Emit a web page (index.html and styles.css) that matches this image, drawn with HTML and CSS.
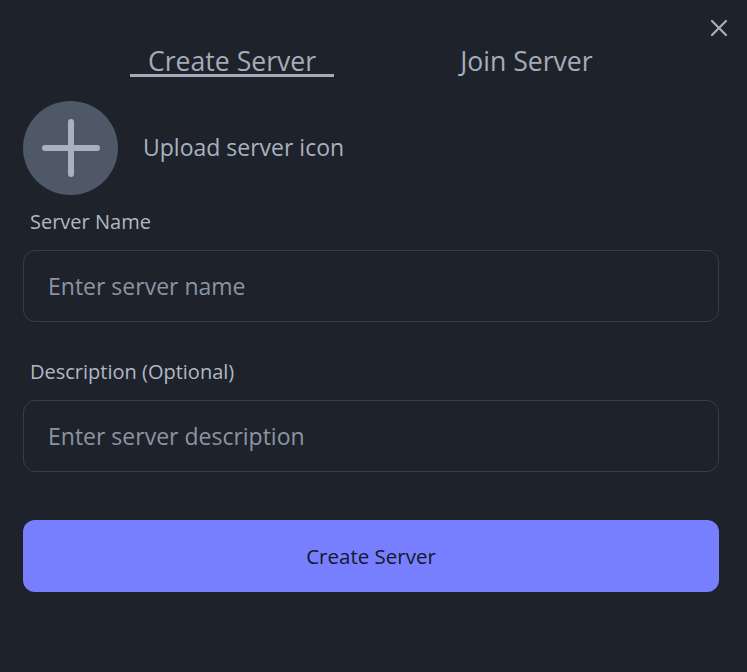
FILE: index.html
```html
<!DOCTYPE html>
<html>
<head>
<meta charset="utf-8">
<link rel="stylesheet" href="styles.css">
</head>
<body>
<div class="modal">
  <button class="close" aria-label="Close">
    <svg width="18" height="18" viewBox="0 0 18 18"><path d="M2 2L16 16M16 2L2 16" stroke="#a7afbd" stroke-width="2.2" stroke-linecap="round"/></svg>
  </button>
  <div class="tabs">
    <button class="tab active">Create Server</button>
    <button class="tab">Join Server</button>
  </div>
  <div class="upload">
    <div class="upload-circle">
      <svg width="58" height="58" viewBox="0 0 58 58"><path d="M29 3V55M3 29H55" stroke="#a9b1bf" stroke-width="6" stroke-linecap="round"/></svg>
    </div>
    <span class="upload-text">Upload server icon</span>
  </div>
  <label class="label">Server Name</label>
  <div class="input">Enter server name</div>
  <label class="label second">Description (Optional)</label>
  <div class="input">Enter server description</div>
  <button class="submit">Create Server</button>
</div>
</body>
</html>
```
FILE: styles.css
```css
* { box-sizing: border-box; }
html, body { margin: 0; padding: 0; background: #1e222a; }
body { font-family: "Open Sans", "Noto Sans", sans-serif; color: #a7afbd; }
.modal { position: relative; width: 747px; height: 672px; padding: 0 28px 0 23px; display: flex; flex-direction: column; }
.close { position: absolute; top: 19px; right: 19px; background: none; border: 0; padding: 0; width: 18px; height: 18px; display: flex; }
.tabs { display: flex; padding-left: 107px; margin-top: 48px; }
.tab { background: none; border: 0; font-family: inherit; font-size: 26.6px; color: #a4acba; padding: 0 18px; height: 29px; line-height: 26px; border-bottom: 3px solid transparent; }
.tab.active { border-bottom-color: #a4acba; }
.tab + .tab { margin-left: 108px; }
.upload { display: flex; align-items: center; gap: 25px; margin-top: 24px; }
.upload-circle { width: 95px; height: 94px; border-radius: 50%; background: #4f5867; display: flex; align-items: center; justify-content: center; }
.upload-text { font-size: 23px; color: #a9b1bf; padding-bottom: 3px; }
.label { font-size: 20px; color: #b1b8c4; padding-left: 7px; margin-top: 14px; line-height: 26px; }
.label.second { margin-top: 37px; }
.input { height: 72px; border: 1px solid #383e49; border-radius: 12px; margin-top: 15px; padding-left: 24px; display: flex; align-items: center; font-size: 23px; color: #8b94a2; }
.submit { margin-top: 48px; height: 72px; border: 0; border-radius: 12px; background: #777ffe; color: #141827; font-family: inherit; font-size: 20.5px; font-weight: 500; }
```
